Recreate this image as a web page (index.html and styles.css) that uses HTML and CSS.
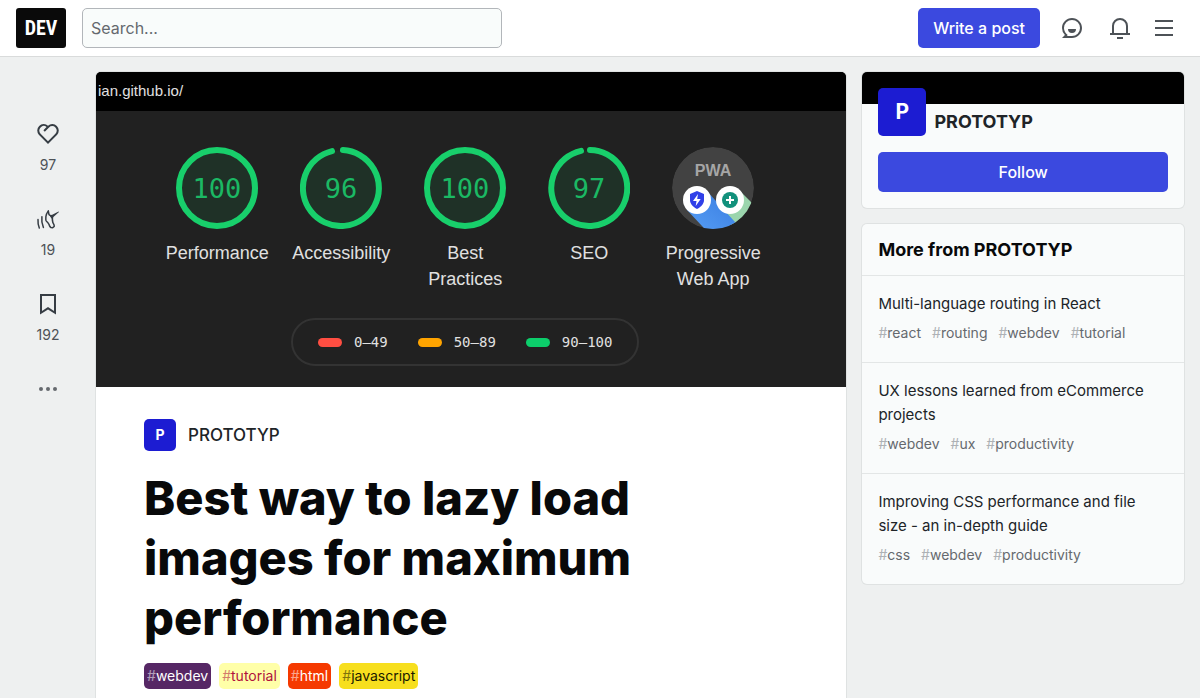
FILE: index.html
```html
<!DOCTYPE html>
<html lang="en">
<head>
<meta charset="utf-8">
<meta name="viewport" content="width=device-width, initial-scale=1">
<title>Best way to lazy load images for maximum performance - DEV</title>
<link rel="stylesheet" href="styles.css">
</head>
<body>
<header class="topbar">
  <a class="brand" href="#">DEV</a>
  <form class="search" role="search">
    <input class="search-input" type="text" placeholder="Search..." aria-label="Search">
  </form>
  <nav class="top-actions" aria-label="Account">
    <a class="button write" href="#">Write a post</a>
    <button class="icon-button" type="button" aria-label="Connect">
      <svg class="icon" viewBox="0 0 24 24"><path d="M2 12C2 6.477 6.477 2 12 2s10 4.477 10 10-4.477 10-10 10H2l2.929-2.929A9.969 9.969 0 012 12zm4.828 8H12a8 8 0 10-8-8c0 2.152.851 4.165 2.343 5.657l1.414 1.414-.929.929zM8 13h8a4 4 0 11-8 0z"/></svg>
    </button>
    <button class="icon-button bell" type="button" aria-label="Notifications">
      <svg class="icon" viewBox="0 0 24 24"><path d="M20 17h2v2H2v-2h2v-7a8 8 0 1116 0v7zm-2 0v-7a6 6 0 10-12 0v7h12zm-9 4h6v2H9v-2z"/></svg>
    </button>
    <button class="icon-button menu" type="button" aria-label="Menu">
      <svg class="icon" viewBox="0 0 24 24"><path d="M3 4h18v2H3V4zm0 7h18v2H3v-2zm0 7h18v2H3v-2z"/></svg>
    </button>
  </nav>
</header>

<div class="layout">
  <aside class="reactions" aria-label="Reactions">
    <button class="reaction" type="button" aria-label="Like">
      <svg class="icon" viewBox="0 0 24 24"><path d="M21.179 12.794l.013.014L12 22l-9.192-9.192.013-.014A6.5 6.5 0 0112 3.64a6.5 6.5 0 019.179 9.154zM4.575 5.383a4.5 4.5 0 000 6.364L12 19.172l7.425-7.425a4.5 4.5 0 10-6.364-6.364L8.818 9.626 7.404 8.21l3.162-3.162a4.5 4.5 0 00-5.99.334l-.001.001z"/></svg>
      <span class="count">97</span>
    </button>
    <button class="reaction" type="button" aria-label="Unicorn">
      <svg class="icon" viewBox="0 0 24 24">
        <g fill="none" stroke="currentColor" stroke-width="1.500" stroke-linejoin="round" stroke-linecap="round">
          <path d="M12.300 3.800C10.800 6 10 7.500 9.900 9.500c0 1.500-.3 2.600.1 4 .8 1.500 2.300 2.300 2.900 3.700.4 1.400.9 2.700 2 3.300l1.800.2 1.500-1.200-.1-1.500-1.300-2.600c-.5-2-.6-3.600-.3-5.400L13 7.600z"/>
          <path d="M5.900 9.800c-.5 3.600.1 7.200 1.500 10.700M2 12.600c-.2 2.900.2 5.600 1.300 8.400"/>
        </g>
        <path d="M13.500 8.200l2.700-.5 6.400-3.300.4.600-6.200 5.600-1.300 1.200z"/>
      </svg>
      <span class="count">19</span>
    </button>
    <button class="reaction" type="button" aria-label="Save">
      <svg class="icon" viewBox="0 0 24 24"><path d="M4 2h16v20.500l-8-5-8 5V2zm14 2H6v14.900l6-3.800 6 3.800V4z"/></svg>
      <span class="count">192</span>
    </button>
    <button class="reaction more" type="button" aria-label="More options">
      <svg class="icon" viewBox="0 0 24 24"><circle cx="5" cy="12" r="2"/><circle cx="12" cy="12" r="2"/><circle cx="19" cy="12" r="2"/></svg>
    </button>
  </aside>

  <main class="article">
    <div class="cover">
      <div class="cover-url">ian.github.io/</div>
      <div class="report">
        <div class="gauges">
          <div class="gauge">
            <svg class="dial" viewBox="0 0 82 82"><circle class="ring" cx="41" cy="41" r="38"/><text class="score" x="41" y="51">100</text></svg>
            <span>Performance</span>
          </div>
          <div class="gauge">
            <svg class="dial" viewBox="0 0 82 82"><circle class="ring-fill" cx="41" cy="41" r="38"/><path class="arc" d="M43 3.100A38 38 0 1 1 32 4.100"/><text class="score" x="41" y="51">96</text></svg>
            <span>Accessibility</span>
          </div>
          <div class="gauge">
            <svg class="dial" viewBox="0 0 82 82"><circle class="ring" cx="41" cy="41" r="38"/><text class="score" x="41" y="51">100</text></svg>
            <span>Best<br>Practices</span>
          </div>
          <div class="gauge">
            <svg class="dial" viewBox="0 0 82 82"><circle class="ring-fill" cx="41" cy="41" r="38"/><path class="arc" d="M42 3A38 38 0 1 1 33 3.900"/><text class="score" x="41" y="51">97</text></svg>
            <span>SEO</span>
          </div>
          <div class="gauge">
            <svg class="dial" viewBox="0 0 82 82">
              <defs>
                <clipPath id="disc"><circle cx="41" cy="41" r="41"/></clipPath>
                <linearGradient id="blue" x1="0" y1="1" x2="1" y2="0"><stop offset="0" stop-color="#5ba4f8"/><stop offset="1" stop-color="#3274dc"/></linearGradient>
              </defs>
              <g clip-path="url(#disc)">
                <circle cx="41" cy="41" r="41" fill="#424242"/>
                <path d="M67 43L100 76 70 92 48 63z" fill="#9bd5ad"/>
                <path d="M34 43L82 96H46L15 63z" fill="url(#blue)"/>
              </g>
              <text class="pwa-word" x="41" y="29">PWA</text>
              <circle cx="25" cy="53" r="14" fill="#fff"/>
              <circle cx="58" cy="53" r="14" fill="#fff"/>
              <path d="M25 44l7 3v6c0 4-3 7-7 9-4-2-7-5-7-9v-6z" fill="#3040e8"/>
              <path d="M26 47l-5 7h3.500l-.8 5 5-7h-3.500z" fill="#fff"/>
              <circle cx="58" cy="53" r="8" fill="#12917c"/>
              <path d="M58 49v8M54 53h8" stroke="#fff" stroke-width="2"/>
            </svg>
            <span>Progressive<br>Web App</span>
          </div>
        </div>
        <ul class="legend">
          <li class="range"><i class="swatch fail"></i>0–49</li>
          <li class="range"><i class="swatch average"></i>50–89</li>
          <li class="range"><i class="swatch pass"></i>90–100</li>
        </ul>
      </div>
    </div>
    <div class="article-head">
      <a class="author" href="#"><span class="org-logo small">P</span>PROTOTYP</a>
      <h1 class="title">Best way to lazy load images for maximum performance</h1>
      <div class="tags">
        <a class="tag webdev" href="#"><span class="hash">#</span>webdev</a>
        <a class="tag tutorial" href="#"><span class="hash">#</span>tutorial</a>
        <a class="tag html" href="#"><span class="hash">#</span>html</a>
        <a class="tag javascript" href="#"><span class="hash">#</span>javascript</a>
      </div>
    </div>
  </main>

  <aside class="sidebar">
    <section class="card profile">
      <div class="profile-body">
        <a class="profile-link" href="#"><span class="org-logo">P</span><span class="profile-name">PROTOTYP</span></a>
        <button class="button follow" type="button">Follow</button>
      </div>
    </section>
    <section class="card">
      <h2 class="card-title">More from PROTOTYP</h2>
      <a class="post" href="#">
        <span class="post-title">Multi-language routing in React</span>
        <span class="post-tags"><span><i>#</i>react</span><span><i>#</i>routing</span><span><i>#</i>webdev</span><span><i>#</i>tutorial</span></span>
      </a>
      <a class="post" href="#">
        <span class="post-title">UX lessons learned from eCommerce projects</span>
        <span class="post-tags"><span><i>#</i>webdev</span><span><i>#</i>ux</span><span><i>#</i>productivity</span></span>
      </a>
      <a class="post" href="#">
        <span class="post-title">Improving CSS performance and file size - an in-depth guide</span>
        <span class="post-tags"><span><i>#</i>css</span><span><i>#</i>webdev</span><span><i>#</i>productivity</span></span>
      </a>
    </section>
  </aside>
</div>
</body>
</html>
```
FILE: styles.css
```css
* { box-sizing: border-box; }

body {
  margin: 0;
  background: #eef0f0;
  color: #202428;
  font: 16px/24px Inter, "Liberation Sans", sans-serif;
}

a { color: inherit; text-decoration: none; }
button { border: 0; padding: 0; background: none; color: inherit; font: inherit; cursor: pointer; }
.icon { display: block; width: 24px; height: 24px; fill: currentColor; }

/* Top bar */
.topbar {
  display: flex;
  align-items: center;
  height: 57px;
  padding: 0 16px;
  background: #fff;
  border-bottom: 1px solid #d9dbdb;
}
.brand {
  width: 50px;
  margin-right: 16px;
  border-radius: 3px;
  background: #0a0a0a;
  color: #fff;
  font: bold 20px/40px "Roboto Condensed", Roboto, sans-serif;
  text-align: center;
}
.search { flex: 0 1 420px; }
.search-input {
  display: block;
  width: 100%;
  height: 40px;
  padding: 0 8px;
  border: 1px solid #b2b6ba;
  border-radius: 5px;
  background: #f9fcfb;
  color: #202428;
  font: inherit;
}
.search-input::placeholder { color: #65696e; opacity: 1; }
.top-actions { display: flex; align-items: center; margin-left: auto; color: #4d5257; }
.button {
  display: block;
  padding: 8px 15px;
  border-radius: 5px;
  background: #3b49df;
  color: #fff;
  font-weight: 500;
  text-align: center;
}
.write { margin-right: 12px; }
.icon-button { padding: 8px; }
.bell { margin: 0 4px 0 8px; }

/* Page grid */
.layout {
  display: grid;
  grid-template-columns: 64px minmax(0, 7fr) minmax(0, 3fr);
  align-items: start;
  gap: 16px;
  padding: 15px 16px 0;
}
.reactions {
  display: flex;
  flex-direction: column;
  align-items: center;
  gap: 32px;
  padding-top: 50px;
  color: #363d44;
}
.reaction { display: flex; flex-direction: column; align-items: center; gap: 9px; }
.count { color: #4d5257; font-size: 14px; line-height: 20px; }
.more { color: #65696e; }

/* Article */
.article {
  overflow: hidden;
  min-height: calc(100vh - 72px);
  border-radius: 5px 5px 0 0;
  background: #fff;
  box-shadow: 0 0 0 1px #dfe2e2;
}
.cover { padding-bottom: 21px; background: #212121; color: #e0e0e0; font-family: "Liberation Sans", sans-serif; }
.cover-url { height: 39px; padding-left: 2px; background: #000; font-size: 15px; line-height: 37px; }
.report { display: flex; flex-direction: column; align-items: center; gap: 26px; padding: 36px 12px 0 0; }
.gauges { display: grid; grid-template-columns: repeat(5, minmax(0, 124px)); }
.gauge {
  display: flex;
  flex-direction: column;
  align-items: center;
  gap: 11px;
  font-size: 18px;
  line-height: 26px;
  text-align: center;
}
.dial { width: 82px; height: 82px; }
.ring, .ring-fill { fill: #1f3127; }
.ring, .arc { stroke: #18cf6b; stroke-width: 6; }
.arc { fill: none; stroke-linecap: round; }
.score { fill: #1bb964; font: 27px "DejaVu Sans Mono", monospace; text-anchor: middle; }
.pwa-word { fill: #a6a6a6; font: bold 16px "Liberation Sans", sans-serif; text-anchor: middle; }
.legend {
  display: flex;
  gap: 30px;
  margin: 0;
  padding: 11px 25px;
  border: 2px solid #333;
  border-radius: 24px;
  list-style: none;
  font: 14px/22px "DejaVu Sans Mono", monospace;
}
.range { display: flex; align-items: center; gap: 12px; }
.swatch { width: 24px; height: 9px; border-radius: 5px; }
.fail { background: #ff4e42; }
.average { background: #ffa400; }
.pass { background: #0cce6b; }

.article-head { padding: 32px 48px 8px; }
.author { display: flex; align-items: center; gap: 12px; font-size: 17px; font-weight: 500; }
.org-logo {
  flex: none;
  width: 48px;
  border-radius: 5px;
  background: #1c1cd2;
  color: #fff;
  font-size: 21px;
  font-weight: 700;
  line-height: 48px;
  text-align: center;
}
.small { width: 32px; font-size: 14px; line-height: 32px; }
.title {
  max-width: 540px;
  margin: 17px 0 15px;
  color: #08090a;
  font-size: 47px;
  font-weight: 800;
  line-height: 60px;
}
.tags { display: flex; gap: 8px; }
.tag { padding: 0 3px; border-radius: 5px; font-size: 14px; line-height: 26px; }
.hash { opacity: .55; }
.webdev { background: #562765; color: #fff; }
.tutorial { background: #ffffa8; color: #b0123c; }
.html { background: #f53900; color: #fff; }
.javascript { background: #f7df1e; color: #1a1a00; }

/* Sidebar */
.sidebar { display: grid; gap: 16px; }
.card { overflow: hidden; border-radius: 5px; background: #f9fbfb; box-shadow: 0 0 0 1px #dfe2e2; }
.profile { border-top: 32px solid #000; overflow: visible; }
.profile-body { display: grid; gap: 16px; margin-top: -16px; padding: 0 16px 16px; }
.profile-link { display: flex; align-items: flex-end; gap: 8px; }
.profile-name { font-size: 18px; font-weight: 700; line-height: 28px; }
.card-title { margin: 0; padding: 14px 16px 13px; color: #08090a; font-size: 18px; font-weight: 700; line-height: 24px; }
.post { display: grid; gap: 4px; padding: 16px; border-top: 1px solid #e3e6e6; }
.post-title { font-size: 15px; }
.post-tags { display: flex; gap: 11px; color: #65696e; font-size: 14px; line-height: 26px; }
.post-tags i { color: #adb1b5; font-style: normal; }
```
